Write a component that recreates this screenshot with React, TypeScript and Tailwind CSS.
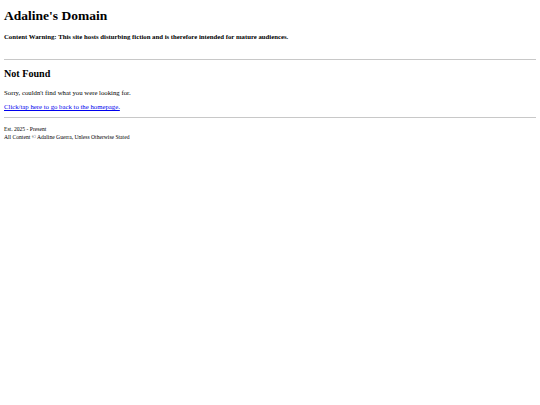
export default function App() {
  return (
    <div
      className="min-h-[405px] w-[540px] bg-white px-[4px] text-black"
      style={{ fontFamily: '"Liberation Serif", "Times New Roman", serif' }}
    >
      <header>
        <h1 className="pt-[8px] text-[13.5px] font-bold leading-[15px]">Adaline's Domain</h1>
        <p className="mt-[10px] text-[6.75px] font-bold leading-[8px]">
          Content Warning: This site hosts disturbing fiction and is therefore intended for mature audiences.
        </p>
      </header>
      <hr className="mt-[18px] border-t border-[#c8c8c8]" />
      <main>
        <h2 className="mt-[8px] text-[10.1px] font-bold leading-[12px]">Not Found</h2>
        <p className="mt-[9px] text-[6.75px] leading-[8px]">Sorry, couldn't find what you were looking for.</p>
        <p className="mt-[6px] text-[6.75px] leading-[8px]">
          <a href="#" className="text-[#0000ee] underline">
            Click/tap here to go back to the homepage.
          </a>
        </p>
      </main>
      <hr className="mt-[6px] border-t border-[#c8c8c8]" />
      <footer className="mt-[7px] text-[5.6px] leading-[8px]">
        <div>Est. 2025 - Present</div>
        <div>All Content © Adaline Guerra, Unless Otherwise Stated</div>
      </footer>
    </div>
  );
}
